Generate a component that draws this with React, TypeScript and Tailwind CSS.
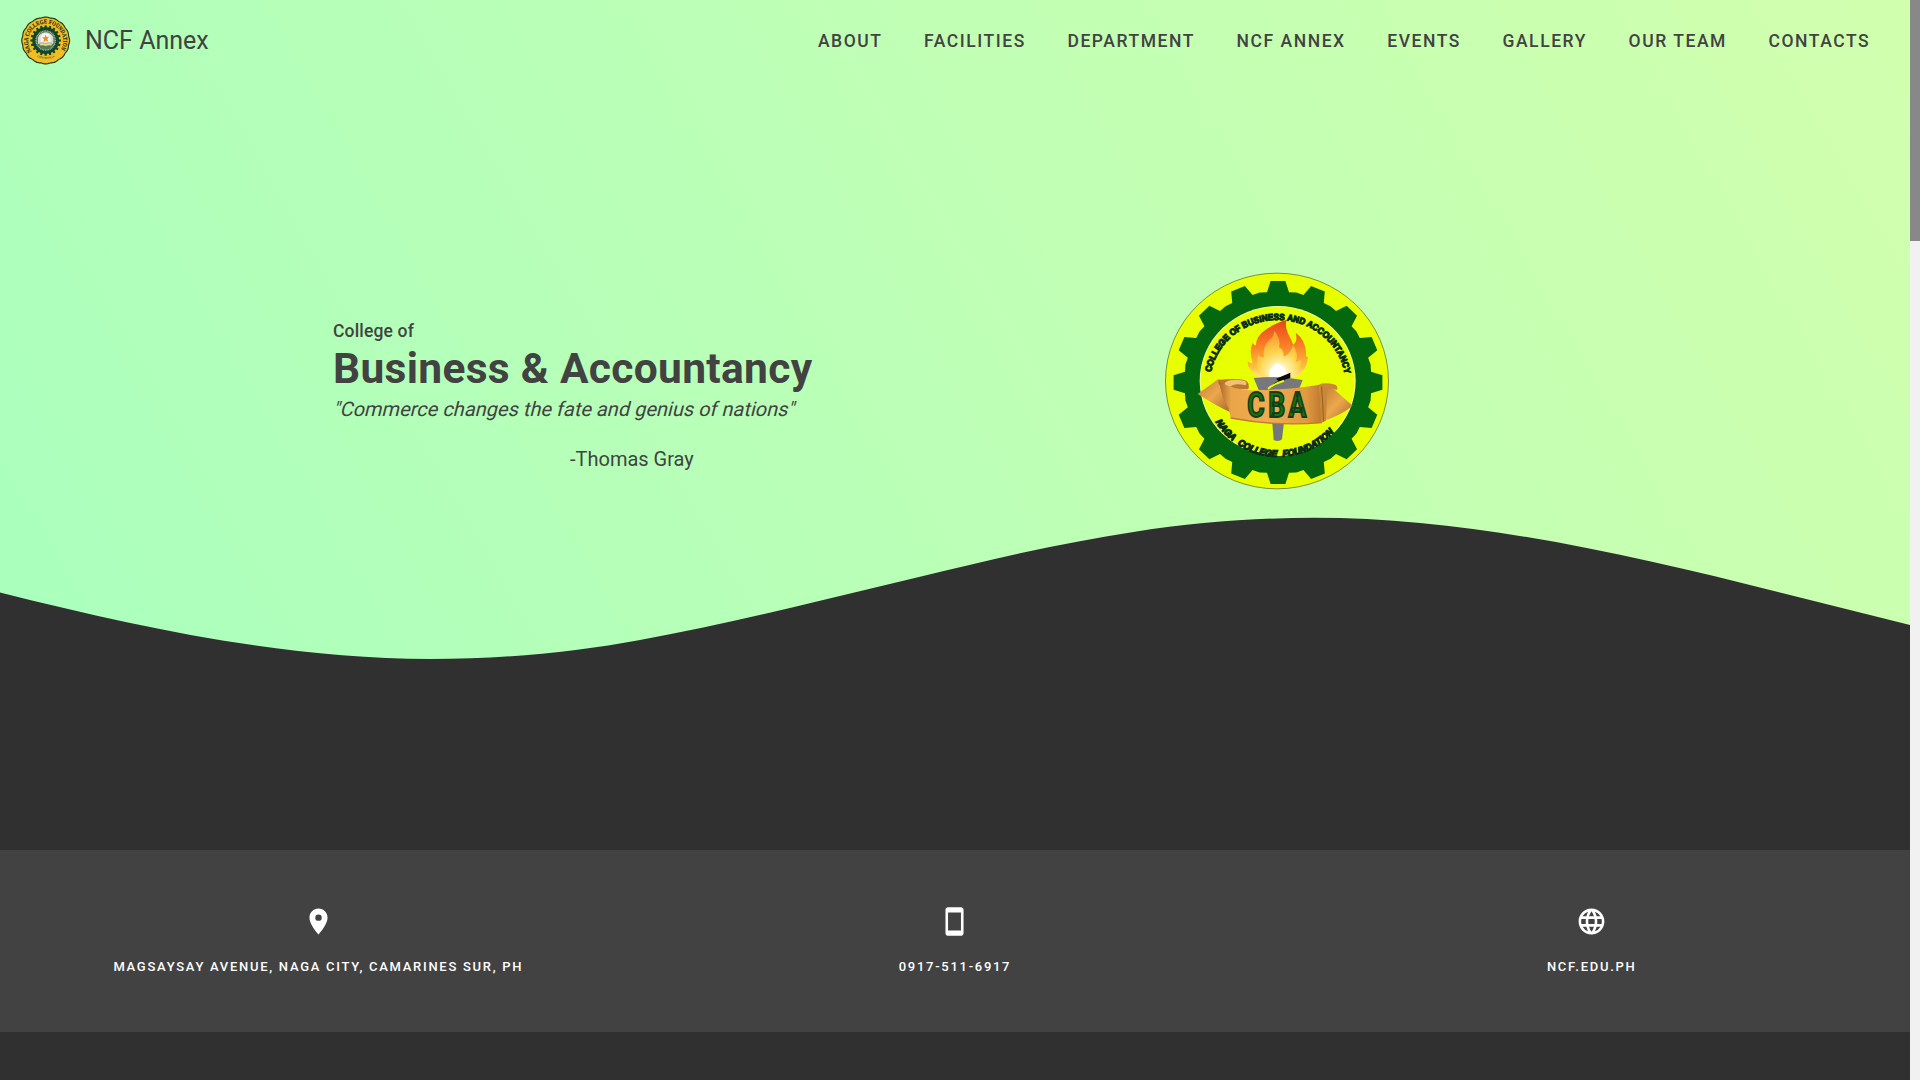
import { MdPlace, MdStayPrimaryPortrait, MdLanguage } from "react-icons/md";

const NAV = ["ABOUT", "FACILITIES", "DEPARTMENT", "NCF ANNEX", "EVENTS", "GALLERY", "OUR TEAM", "CONTACTS"];

const CONTACTS = [
  { Icon: MdPlace, label: "MAGSAYSAY AVENUE, NAGA CITY, CAMARINES SUR, PH" },
  { Icon: MdStayPrimaryPortrait, label: "0917-511-6917" },
  { Icon: MdLanguage, label: "NCF.EDU.PH" },
];

// Outline of a cog: each tooth is a trapezoid between the root and tip ellipses.
function gear(cx: number, cy: number, teeth: number, tipX: number, tipY: number, root: number, wide: number, narrow: number) {
  const step = (Math.PI * 2) / teeth;
  const pts: string[] = [];
  const at = (a: number, k: number) => `${(cx + Math.sin(a) * tipX * k).toFixed(1)},${(cy - Math.cos(a) * tipY * k).toFixed(1)}`;
  for (let i = 0; i < teeth; i++) {
    const a = i * step;
    pts.push(at(a - wide * step, root), at(a - narrow * step, 1), at(a + narrow * step, 1), at(a + wide * step, root), at(a + step / 2, root * 1.008));
  }
  return pts.join(" ");
}

function scallop(cx: number, cy: number, rx: number, ry: number, n: number) {
  const pts: string[] = [];
  for (let i = 0; i < 240; i++) {
    const a = (i / 240) * Math.PI * 2;
    const k = 0.975 + 0.025 * Math.abs(Math.cos((a * n) / 2));
    pts.push(`${(cx + Math.sin(a) * rx * k).toFixed(1)},${(cy - Math.cos(a) * ry * k).toFixed(1)}`);
  }
  return pts.join(" ");
}

function SchoolSeal() {
  return (
    <svg viewBox="20 18 150 146" className="h-[49px] w-[50px]">
      <polygon points={scallop(94, 91, 73.5, 72, 16)} fill="#24371f" />
      <polygon points={scallop(94, 91, 70, 68.5, 16)} fill="#f2bd22" />
      <path id="sealTop" d="M52 124 A53 52 0 1 1 136 124" fill="none" />
      <text fontFamily="Liberation Serif" fontWeight="700" fontSize="18" fill="#20301c" stroke="#20301c" strokeWidth="0.5">
        <textPath href="#sealTop" textLength="226" lengthAdjust="spacingAndGlyphs">NAGA COLLEGE FOUNDATION</textPath>
      </text>
      <path id="sealBottom" d="M57 134 A61 61 0 0 0 131 134" fill="none" />
      <text fontFamily="Liberation Serif" fontWeight="700" fontSize="9" fill="#6b5a1c">
        <textPath href="#sealBottom" startOffset="13" textLength="54">CITY OF NAGA</textPath>
      </text>
      <polygon points={gear(94, 91, 20, 46, 46, 0.87, 0.3, 0.2)} fill="#12462a" />
      <circle cx="94" cy="91" r="30" fill="#557a5a" />
      <circle cx="94" cy="91" r="29" fill="none" stroke="#c5d3bd" strokeWidth="4" strokeDasharray="2 3" />
      <path d="M71 82 Q75 68 94 66 Q113 68 117 82 L117 101 Q94 108 71 101Z" fill="#d4ddd2" />
      <path d="M79 80 Q83 70 94 69 Q106 70 109 80 V97 H79Z" fill="#f6f6f0" />
      <path d="M94 73 L97 81 L104 79 L99 87 L102 95 L94 91 L88 96 L89 87 L83 82 L91 81Z" fill="#ef8a2c" />
      <path d="M76 99 Q85 96 94 100 Q103 96 113 99 V107 Q103 104 94 108 Q85 104 76 107Z" fill="#e8d98c" stroke="#4e5c34" strokeWidth="1" />
    </svg>
  );
}

function CollegeEmblem() {
  return (
    <svg viewBox="42 36 678 654" className="h-[218px] w-[226px]">
      <defs>
        <linearGradient id="flameOuter" x1="0" y1="0" x2="0" y2="1">
          <stop offset="0" stopColor="#e8431a" />
          <stop offset="0.45" stopColor="#f98126" />
          <stop offset="0.8" stopColor="#fdbc3c" />
          <stop offset="1" stopColor="#ffe98a" />
        </linearGradient>
        <radialGradient id="flameCore" cx="0.5" cy="0.9" r="0.75">
          <stop offset="0" stopColor="#ffffff" />
          <stop offset="0.25" stopColor="#fff3b8" />
          <stop offset="0.6" stopColor="#ffd64e" />
          <stop offset="1" stopColor="#fba534" />
        </radialGradient>
        <linearGradient id="scroll" x1="0" y1="0" x2="1" y2="0">
          <stop offset="0" stopColor="#a8642a" />
          <stop offset="0.12" stopColor="#eaa548" />
          <stop offset="0.5" stopColor="#f0ad50" />
          <stop offset="0.85" stopColor="#e09a41" />
          <stop offset="1" stopColor="#bd7830" />
        </linearGradient>
        <linearGradient id="scrollTail" x1="0" y1="0" x2="1" y2="1">
          <stop offset="0" stopColor="#c27c34" />
          <stop offset="0.5" stopColor="#eca84c" />
          <stop offset="1" stopColor="#a9652b" />
        </linearGradient>
      </defs>
      <ellipse cx="381" cy="363" rx="334.500" ry="323.500" fill="#e8ff00" stroke="#4d5a1d" strokeWidth="2" />
      <polygon points={gear(384, 367.5, 16, 314, 305, 0.895, 0.3, 0.18)} fill="#04680f" />
      <ellipse cx="383" cy="363" rx="234" ry="225" fill="#f4ff9a" />
      <ellipse cx="383" cy="363" rx="231" ry="222" fill="#e8ff00" />

      <path id="emblemTop" d="M183 337 A203 190 0 0 1 585 352" fill="none" />
      <text fontFamily="Liberation Sans" fontWeight="700" fontSize="27" fill="#0b3016" stroke="#0b3016" strokeWidth="3.500">
        <textPath href="#emblemTop" textLength="556" lengthAdjust="spacingAndGlyphs">COLLEGE OF BUSINESS AND ACCOUNTANCY</textPath>
      </text>
      <path id="emblemBottom" d="M197 486 A222 222 0 0 0 568 495" fill="none" />
      <text fontFamily="Liberation Sans" fontWeight="700" fontStyle="italic" fontSize="28" wordSpacing="10" fill="#0b3016" stroke="#0b3016" strokeWidth="4">
        <textPath href="#emblemBottom" textLength="412" lengthAdjust="spacingAndGlyphs">NAGA COLLEGE FOUNDATION</textPath>
      </text>

      <path d="M366 478 L402 486 L396 538 Q386 547 371 540Z" fill="#76767a" />
      <path
        d="M327 353 Q290 330 293 303 Q302 312 308 309 Q296 272 308 249 Q314 258 318 255 Q318 228 350 207 Q370 192 409 180 Q405 200 413 218 Q424 240 430 254 Q444 243 437 218 Q467 240 468 278 Q467 292 474 291 Q470 333 438 352Z"
        fill="url(#flameOuter)"
      />
      <path
        d="M338 352 Q312 325 325 284 Q333 296 342 290 Q336 255 366 233 Q372 224 373 213 Q394 240 387 262 Q402 269 401 290 Q420 283 430 255 Q447 284 437 306 Q451 305 455 295 Q452 332 428 352Z"
        fill="url(#flameCore)"
      />
      <path d="M311 354 Q384 346 458 360 L446 390 H326Z" fill="#78787c" />
      <path d="M358 352 Q352 326 381 308 Q412 322 410 346Z" fill="#ffffff" />
      <path d="M378 356 L421 338 V354 Q392 360 363 385 Q370 367 386 364Z" fill="#0b0b0a" />
      <path d="M354 386 Q374 370 402 362" fill="none" stroke="#e8ff00" strokeWidth="6" />

      <path d="M143 402 L205 357 Q226 366 238 362 L240 456 Q206 442 143 402Z" fill="url(#scrollTail)" />
      <path d="M608 437 L552 388 Q535 376 516 380 L514 484 Q567 470 608 437Z" fill="url(#scrollTail)" />
      <path d="M205 360 Q252 354 284 360 Q298 366 296 382 Q300 382 292 388 L230 388 Q200 376 205 360Z" fill="#b97730" />
      <path d="M223 372 Q232 354 284 362 Q294 368 286 376 Q252 366 236 384Z" fill="#efc078" />
      <path d="M206 364 Q256 394 322 391 Q430 388 508 374 L516 488 Q380 500 242 474 Q238 440 220 418Z" fill="url(#scroll)" />
      <path d="M507 374 Q522 366 556 374 Q566 382 560 390 Q542 382 532 390 L528 482 L514 488Z" fill="#c98738" />
      <path d="M515 380 L521 484" stroke="#9b5d23" strokeWidth="3" />
      <path d="M242 474 Q380 500 516 488" fill="none" stroke="#c07a2e" strokeWidth="4" />
      <text
        transform="translate(292 470) scale(0.75 1)"
        letterSpacing="14"
        fontFamily="Roboto"
        fontWeight="700"
        fontSize="106"
        fill="#17730f"
        stroke="#143d1c"
        strokeWidth="6"
      >
        CBA
      </text>
    </svg>
  );
}

export default function App() {
  return (
    <div className="flex h-[1080px] w-full overflow-hidden bg-[#303030] font-['Roboto',sans-serif] text-[#424242]">
      <main className="flex w-[1910px] flex-col">
        <section className="relative h-[850px] bg-[linear-gradient(60deg,#a8ffbe,#d1ffae)]">
          <svg viewBox="0 0 1910 350" className="absolute bottom-0 left-0 h-[350px] w-[1910px]">
            <path
              d="M0 92.400 C143 128.300 287 159 430 159 C505 159 575 152 640 140 C700 128.900 760 115.200 820 100.700 L920 76.800 C954 68.600 987 60.400 1020 53.300 C1058 45.100 1096 37.500 1135 31.700 C1195 22.500 1254 17.800 1314 17.800 C1513 17.800 1711 76.300 1910 125 V350 H0Z"
              fill="#303030"
            />
          </svg>

          <header className="relative flex h-20 items-center justify-between pr-[19px] pl-[21px]">
            <div className="flex items-center gap-[14px]">
              <SchoolSeal />
              <span className="text-[25px] leading-none">NCF Annex</span>
            </div>
            <nav className="flex pt-[2px]">
              {NAV.map((item) => (
                <a key={item} className="px-[20.75px] text-[17.5px] font-medium tracking-[1.5625px]">
                  {item}
                </a>
              ))}
            </nav>
          </header>

          <div className="relative flex pl-[333px]">
            <div className="w-[831px] pt-[238px]">
              <p className="text-[17.5px] leading-[27.5px] font-medium tracking-[0.16px]">College of</p>
              <h1 className="text-[42.5px] leading-[46px] font-bold tracking-[0.3125px]">Business &amp; Accountancy</h1>
              <p className="mt-[2px] origin-[0_22px] -skew-x-[14deg] text-[20px] leading-[30px]">"Commerce changes the fate and genius of nations"</p>
              <p className="mt-5 pl-[237px] text-[20px] leading-[30px]">-Thomas Gray</p>
            </div>
            <div className="pt-[192px]">
              <CollegeEmblem />
            </div>
          </div>
        </section>

        <section className="grid h-[182px] grid-cols-3 bg-[#424242] text-white">
          {CONTACTS.map(({ Icon, label }) => (
            <div key={label} className="flex flex-col items-center pt-[56px]">
              <Icon className="size-[31px]" />
              <p className="mt-[20px] text-[13px] leading-5 font-medium tracking-[1.72px]">{label}</p>
            </div>
          ))}
        </section>
      </main>

      <div className="w-[10px] bg-[#f1f1f1]">
        <div className="h-[241px] bg-[#888888]" />
      </div>
    </div>
  );
}
